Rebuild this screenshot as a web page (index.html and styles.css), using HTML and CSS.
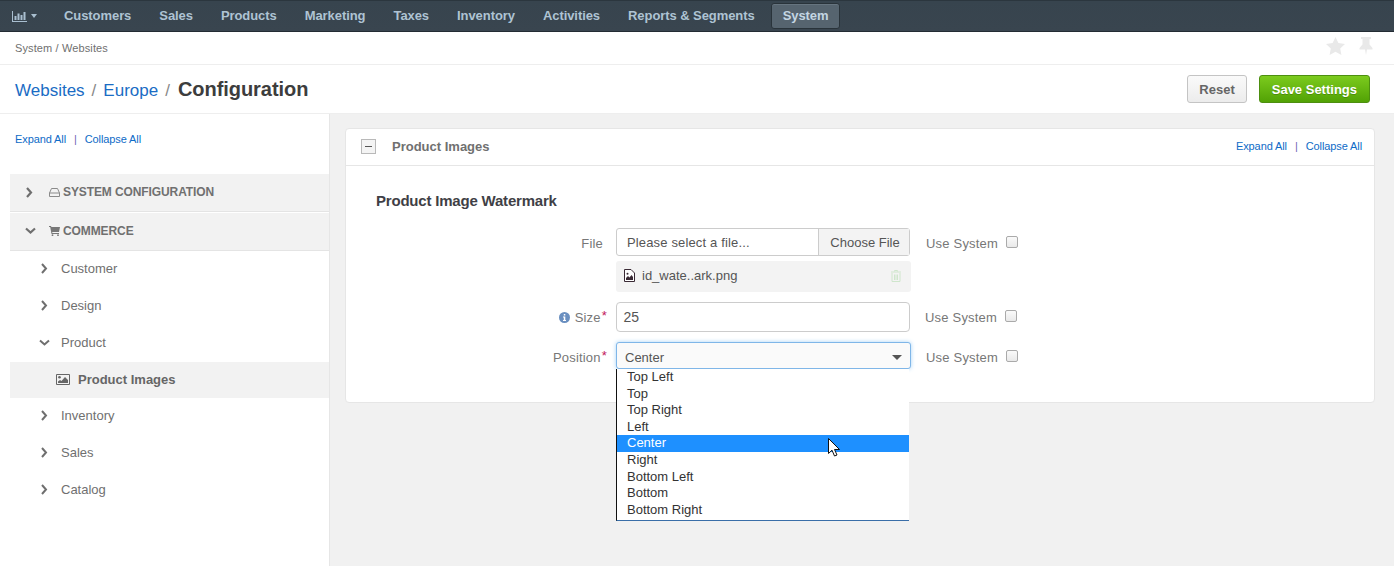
FILE: index.html
```html
<!DOCTYPE html>
<html lang="en">
<head>
<meta charset="utf-8">
<title>Configuration</title>
<link rel="stylesheet" href="styles.css">
</head>
<body>
<nav class="topnav">
  <a class="nav-icon"><svg width="15" height="11" viewBox="0 0 15 11"><path d="M0 0h1v10h14v1H0z M2.500 5h2v4h-2z M5.500 2.500h2V9h-2z M8.500 4h2v5h-2z M11.500 1h2v8h-2z" fill="#a9bfd0"/></svg><i class="caret"></i></a>
  <a class="nav-item">Customers</a>
  <a class="nav-item">Sales</a>
  <a class="nav-item">Products</a>
  <a class="nav-item">Marketing</a>
  <a class="nav-item">Taxes</a>
  <a class="nav-item">Inventory</a>
  <a class="nav-item">Activities</a>
  <a class="nav-item">Reports &amp; Segments</a>
  <a class="nav-item active">System</a>
</nav>
<div class="crumbs">
  <span>System / Websites</span>
  <div class="crumb-icons">
    <svg width="19" height="18" viewBox="0 0 19 18"><path d="M9.500 0l2.900 6 6.600.9-4.800 4.500 1.200 6.600-5.900-3.200L3.600 18l1.200-6.600L0 6.900 6.600 6z" fill="#e9e9e9"/></svg>
    <svg width="14" height="18" viewBox="0 0 14 18"><path d="M2 0h10v2h-1.500v5.500L13.500 11v1.500H8L7 18l-1-5.500H.5V11l3-3.500V2H2z" fill="#e9e9e9"/></svg>
  </div>
</div>
<header class="titlebar">
  <h1 class="title"><a>Websites</a><span class="sep">/</span><a>Europe</a><span class="sep">/</span><b>Configuration</b></h1>
  <div class="actions">
    <button class="btn">Reset</button>
    <button class="btn primary">Save Settings</button>
  </div>
</header>
<div class="main">
  <aside class="sidebar">
    <div class="links side-links"><a>Expand All</a><span>|</span><a>Collapse All</a></div>
    <div class="group">
      <svg class="chev" width="8" height="11" viewBox="0 0 8 11"><path d="M1.500 1l4 4.500-4 4.500" fill="none" stroke="#6f6f6f" stroke-width="2.200"/></svg>
      <svg class="gicon" width="11" height="9" viewBox="0 0 11 9"><path d="M2.500.5h6l2 4.500v3.500H.5V5zM.5 5h10" fill="none" stroke="#8a8a8a"/></svg>
      <span>SYSTEM CONFIGURATION</span>
    </div>
    <div class="group second">
      <svg class="chev" width="11" height="8" viewBox="0 0 11 8"><path d="M1 1.500l4.500 4 4.500-4" fill="none" stroke="#6f6f6f" stroke-width="2.200"/></svg>
      <svg class="gicon" width="11" height="10" viewBox="0 0 11 10"><path d="M0 0h2l.4 1H11l-1 5H3.200l.2 1H10v1H2.500L1.200 1H0z" fill="#777"/><circle cx="3.500" cy="9.200" r=".9" fill="#777"/><circle cx="9" cy="9.200" r=".9" fill="#777"/></svg>
      <span>COMMERCE</span>
    </div>
    <ul class="tree">
      <li><svg width="8" height="11" viewBox="0 0 8 11"><path d="M1.500 1l4 4.500-4 4.500" fill="none" stroke="#6f6f6f" stroke-width="2"/></svg>Customer</li>
      <li><svg width="8" height="11" viewBox="0 0 8 11"><path d="M1.500 1l4 4.500-4 4.500" fill="none" stroke="#6f6f6f" stroke-width="2"/></svg>Design</li>
      <li><svg width="11" height="8" viewBox="0 0 11 8"><path d="M1 1.500l4.500 4 4.500-4" fill="none" stroke="#6f6f6f" stroke-width="2"/></svg>Product</li>
      <li class="sub"><svg width="14" height="11" viewBox="0 0 14 11"><path d="M.5.500h13v10H.5z" fill="none" stroke="#666"/><circle cx="3.500" cy="3.300" r="1.300" fill="#666"/><path d="M2 9V7.500L4 6l1.500 1L9 3l3 3v3z" fill="#666"/></svg>Product Images</li>
      <li><svg width="8" height="11" viewBox="0 0 8 11"><path d="M1.500 1l4 4.500-4 4.500" fill="none" stroke="#6f6f6f" stroke-width="2"/></svg>Inventory</li>
      <li><svg width="8" height="11" viewBox="0 0 8 11"><path d="M1.500 1l4 4.500-4 4.500" fill="none" stroke="#6f6f6f" stroke-width="2"/></svg>Sales</li>
      <li><svg width="8" height="11" viewBox="0 0 8 11"><path d="M1.500 1l4 4.500-4 4.500" fill="none" stroke="#6f6f6f" stroke-width="2"/></svg>Catalog</li>
    </ul>
  </aside>
  <section class="content">
    <div class="panel">
      <div class="panel-head">
        <span class="toggle"><i></i></span>
        <span class="panel-title">Product Images</span>
        <div class="links"><a>Expand All</a><span>|</span><a>Collapse All</a></div>
      </div>
      <div class="panel-body">
        <h2 class="section-title">Product Image Watermark</h2>
        <div class="row row-file">
          <label class="label">File</label>
          <div class="field">
            <div class="file-input"><span class="file-name">Please select a file...</span><span class="file-btn">Choose File</span></div>
          </div>
          <label class="use">Use System<i class="check"></i></label>
        </div>
        <div class="row row-attach">
          <div class="label"></div>
          <div class="attach">
            <svg width="11" height="13" viewBox="0 0 11 13"><path d="M.5.500h6.500l3.500 3.500v8.500H.5z" fill="#fff" stroke="#3a2a35"/><path d="M2 11V9l2-2 1.500 1.500L7.500 6 9 8v3z" fill="#3a2a35"/><circle cx="3.500" cy="4.800" r="1" fill="#3a2a35"/></svg>
            <span>id_wate..ark.png</span>
            <svg class="trash" width="10" height="12" viewBox="0 0 10 12"><path d="M3.500 1.500V.5h3v1M0 2h10M1 3v8.500h8V3M3.500 4.500v5.500M5 4.500v5.500M6.500 4.500v5.500" fill="none" stroke="#cfe6cc"/></svg>
          </div>
        </div>
        <div class="row row-size">
          <label class="label"><svg class="info" width="11" height="11" viewBox="0 0 11 11"><circle cx="5.500" cy="5.500" r="5.500" fill="#6a8fc0"/><path d="M4.800 2h1.500v1.500H4.800zM4 4.500h2.300v3.500H7v1H4V8h.8V5.500H4z" fill="#fff"/></svg>Size<em>*</em></label>
          <div class="field"><div class="text-input">25</div></div>
          <label class="use tight">Use System<i class="check"></i></label>
        </div>
        <div class="row row-pos">
          <label class="label">Position<em>*</em></label>
          <div class="field select-wrap">
            <div class="select">Center<i class="sel-caret"></i></div>
            <ul class="options">
              <li>Top Left</li>
              <li>Top</li>
              <li>Top Right</li>
              <li>Left</li>
              <li class="hl">Center</li>
              <li>Right</li>
              <li>Bottom Left</li>
              <li>Bottom</li>
              <li>Bottom Right</li>
            </ul>
            <svg class="cursor" width="12" height="19" viewBox="0 0 12 19"><path d="M.5.500v15l3.500-3.300 2.500 5.800 2.500-1-2.500-5.500h5z" fill="#fff" stroke="#111"/></svg>
          </div>
          <label class="use tight">Use System<i class="check"></i></label>
        </div>
      </div>
    </div>
  </section>
</div>
</body>
</html>
```
FILE: styles.css
```css
* { box-sizing: border-box; }
html, body { height: 100%; }
body {
  margin: 0;
  height: 566px;
  overflow: hidden;
  background: #fff;
  font-family: "Liberation Sans", Arial, sans-serif;
  font-size: 14px;
  color: #666;
  display: flex;
  flex-direction: column;
}
a { color: #0e6bc7; text-decoration: none; }
ul { list-style: none; margin: 0; padding: 0; }

.topnav {
  flex: none;
  height: 32px;
  display: flex;
  align-items: center;
  padding: 0 0 0 12px;
  background: linear-gradient(#37444e, #39454f);
  border-top: 1px solid #2b363e;
  border-bottom: 1px solid #232c33;
}
.nav-icon { display: flex; align-items: center; width: 38px; }
.caret {
  margin-left: 4px;
  border: 3.500px solid transparent;
  border-top: 4px solid #a9bfd0;
  border-bottom: 0;
}
.nav-item {
  padding: 0 14px;
  font-size: 13px;
  font-weight: 700;
  color: #aec3d3;
  line-height: 24px;
  letter-spacing: -0.07px;
}
.nav-item.active {
  margin-left: 2px;
  padding: 0 11px;
  background: #56646f;
  border: 1px solid #29333a;
  border-radius: 3px;
  color: #c4d6e3;
  box-shadow: inset 0 1px 0 #66747f;
}

.crumbs {
  flex: none;
  height: 33px;
  display: flex;
  align-items: center;
  justify-content: space-between;
  padding: 0 21px 0 15px;
  font-size: 11px;
  letter-spacing: .12px;
  color: #707070;
  border-bottom: 1px solid #eee;
}
.crumb-icons { display: flex; gap: 14px; align-items: center; margin-bottom: 5px; }

.titlebar {
  flex: none;
  height: 48px;
  display: flex;
  align-items: center;
  justify-content: space-between;
  padding: 0 24px 0 15px;
}
.title { margin: 0; font-size: 17px; font-weight: 400; display: flex; align-items: baseline; }
.title a { color: #1a6cc4; }
.title .sep { margin: 0 7px; color: #888; }
.title b { margin-left: 1px; font-size: 20px; letter-spacing: -0.05px; color: #3d3d3d; }
.actions { display: flex; gap: 12px; }
.btn {
  height: 28px;
  padding: 0 11px;
  border: 1px solid #c4c4c4;
  border-radius: 3px;
  background: linear-gradient(#fafafa, #ececec);
  font: 700 13px "Liberation Sans", Arial, sans-serif;
  color: #666;
}
.btn.primary {
  padding: 0 12px;
  background: linear-gradient(#7ccb1e, #52a205);
  border-color: #4d8f10;
  color: #fff;
  text-shadow: 0 1px 0 rgba(0,0,0,.2);
}

.main { flex: 1; display: flex; min-height: 0; background: #f1f1f1; border-top: 1px solid #eee; }
.sidebar { flex: none; width: 330px; padding-top: 18px; background: #fff; border-right: 1px solid #e6e6e6; }
.links { display: flex; align-items: center; gap: 8px; font-size: 11px; letter-spacing: -0.1px; }
.links span { color: #6f63b5; }
.side-links { padding-left: 15px; height: 14px; }
.group {
  margin: 28px 0 0 10px;
  height: 38px;
  display: flex;
  align-items: center;
  background: #f2f2f2;
  border-bottom: 1px solid #e4e4e4;
  font-size: 12px;
  font-weight: 700;
  letter-spacing: -0.1px;
  color: #707070;
  padding: 0 0 1px 15px;
}
.group .chev { width: 11px; margin-left: -1px; }
.group .gicon { margin: 0 3px 0 14px; }
.group.second { margin-top: 1px; padding-bottom: 2px; }
.group.second .chev { margin-left: 0; }
.group.second .gicon { margin-left: 13px; }
.tree { margin-left: 10px; }
.tree li {
  height: 37px;
  display: flex;
  align-items: center;
  font-size: 13px;
  color: #707070;
  padding: 0 0 2px 29px;
}
.tree li svg { margin-right: 11px; width: 11px; flex: none; }
.tree li.sub {
  height: 36px;
  background: #f2f2f2;
  padding-left: 46px;
  font-weight: 700;
  color: #666;
}
.tree li.sub svg { width: 14px; margin-right: 8px; }

.content { flex: 1; padding: 14px 19px 0 15px; min-width: 0; }
.panel { height: 275px; background: #fff; border: 1px solid #e6e6e6; border-radius: 4px; }
.panel-head {
  height: 37px;
  display: flex;
  align-items: center;
  padding: 0 12px 2px 15px;
  border-bottom: 1px solid #e6e6e6;
}
.toggle {
  width: 15px;
  height: 15px;
  display: flex;
  align-items: center;
  justify-content: center;
  border: 1px solid #b9b9b9;
  background: #f4f4f4;
}
.toggle i { width: 7px; height: 1px; background: #555; }
.panel-title { margin-left: 16px; font-size: 13px; font-weight: 700; color: #707070; flex: 1; }
.panel-body { padding: 27px 0 0 30px; }
.section-title { margin: 0 0 19px; font-size: 15px; letter-spacing: -0.2px; line-height: 16px; font-weight: 700; color: #3f3f46; }

.row { display: flex; align-items: center; }
.label {
  flex: none;
  width: 227px;
  margin-right: 13px;
  text-align: right;
  font-size: 13px;
  letter-spacing: .2px;
  color: #777;
  font-weight: 400;
}
.label em { color: #c2185b; font-style: normal; margin-left: 1px; position: relative; top: -2px; }
.info { margin-right: 5px; vertical-align: -1px; }
.row-file .label, .row-file .use { padding-top: 2px; }
.row-size .label, .row-pos .label { width: 231px; margin-right: 9px; }
.field { flex: none; width: 294px; font-size: 13px; }
.file-input {
  height: 28px;
  display: flex;
  align-items: center;
  border: 1px solid #ccc;
  border-radius: 3px;
  color: #555;
}
.file-name { flex: 1; padding-left: 10px; letter-spacing: .15px; }
.file-btn {
  height: 100%;
  width: 91px;
  padding-left: 2px;
  display: flex;
  align-items: center;
  justify-content: center;
  background: #f3f3f3;
  border-left: 1px solid #ccc;
}
.use { display: flex; align-items: center; margin-left: 16px; font-size: 13px; letter-spacing: .2px; color: #777; }
.use.tight { margin-left: 15px; }
.check {
  width: 12px;
  height: 12px;
  margin: 0 0 2px 8px;
  border: 1px solid #aaa;
  border-radius: 2px;
  background: linear-gradient(#fafafa, #e9e9e9);
}
.row-attach { margin-top: 5px; }
.attach {
  flex: none;
  width: 295px;
  height: 31px;
  display: flex;
  align-items: center;
  gap: 7px;
  padding: 0 10px 2px 8px;
  background: #f3f3f3;
  border-radius: 3px;
  font-size: 13px;
  color: #555;
}
.attach span { flex: 1; }
.row-size { margin-top: 10px; }
.text-input {
  height: 30px;
  padding-left: 6.500px;
  display: flex;
  align-items: center;
  border: 1px solid #ccc;
  border-radius: 4px;
  font-size: 14px;
  color: #555;
}
.row-pos { margin-top: 10px; }
.row-pos .label, .row-pos .use { padding-top: 4px; }
.row-pos .check { margin-bottom: 4px; }
.select-wrap { position: relative; width: 295px; }
.select {
  height: 27px;
  padding: 3px 0 0 8px;
  display: flex;
  align-items: center;
  justify-content: space-between;
  background: #fafafa;
  border: 1px solid #7fb6e8;
  border-radius: 3px;
  box-shadow: 0 0 4px #a9d4f7;
  color: #555;
}
.sel-caret {
  margin-right: 8px;
  border: 5px solid transparent;
  border-top: 5px solid #555;
  border-bottom: 0;
}
.options {
  position: absolute;
  top: 27px;
  left: 0;
  width: 293px;
  height: 152px;
  background: #fff;
  border-left: 1px solid #111;
  border-bottom: 1px solid #3a6ea8;
  color: #333;
  font-size: 13px;
  line-height: 16.600px;
}
.options li { height: 16.600px; padding-left: 10px; }
.options li.hl { background: #1e90ff; color: #fff; }
.cursor { position: absolute; top: 96px; left: 212px; }
```
